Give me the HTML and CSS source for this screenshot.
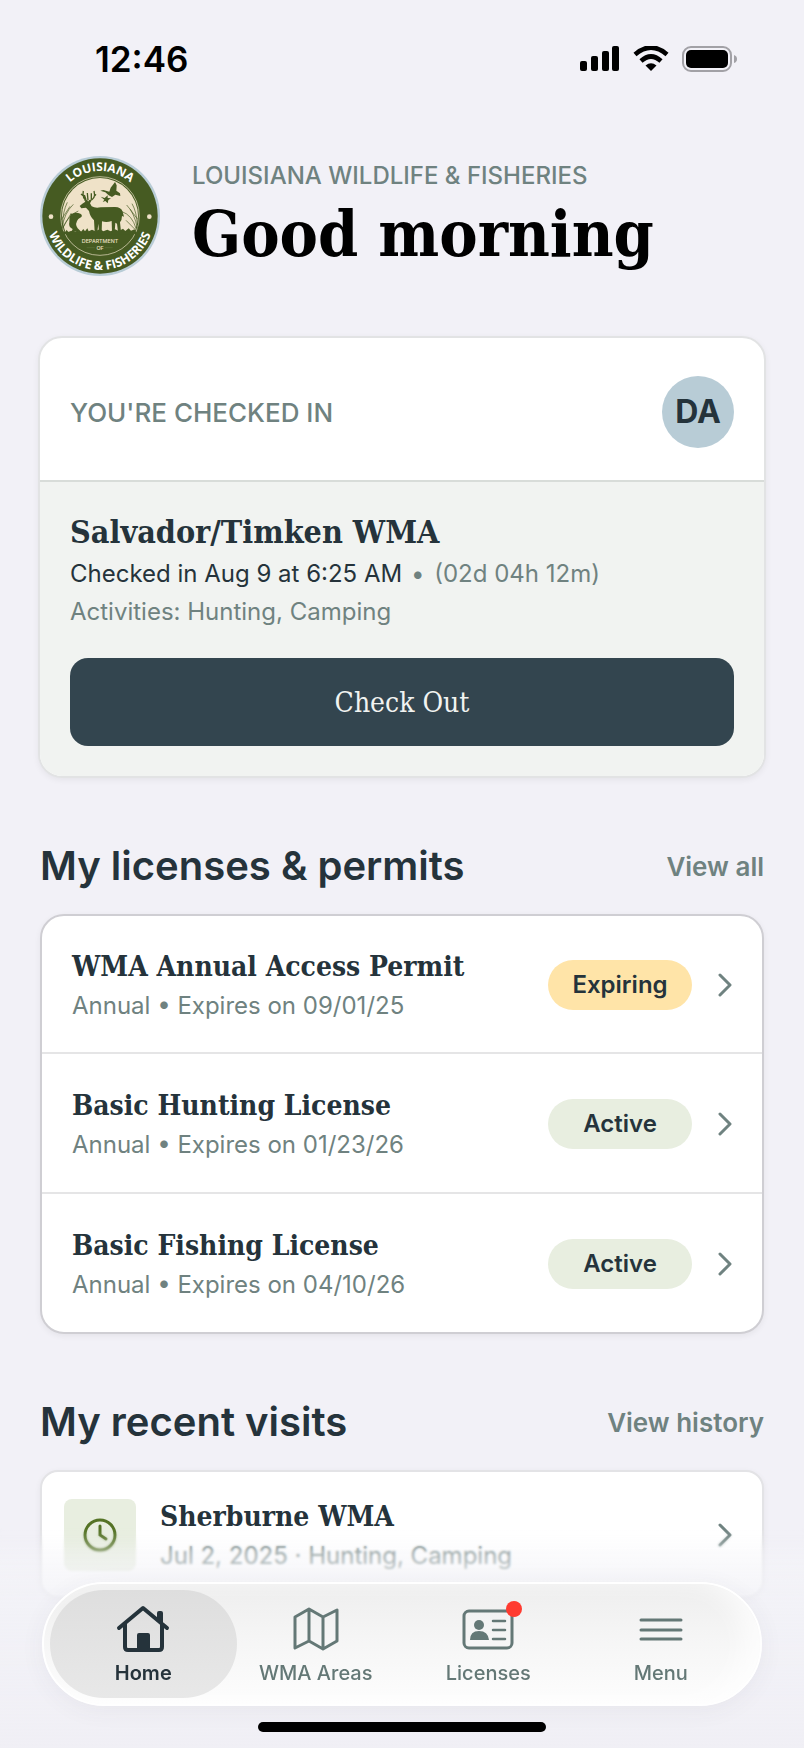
FILE: index.html
```html
<!DOCTYPE html>
<html lang="en">
<head>
    <meta charset="UTF-8">
    <meta name="viewport" content="width=device-width, initial-scale=1.0">
    <title>Louisiana Wildlife &amp; Fisheries</title>
    <link rel="stylesheet" href="styles.css">
</head>
<body>
    <div class="status-bar">
        <span class="time">12:46</span>
        <div class="status-icons">
            <svg width="40" height="26" viewBox="0 0 40 26">
                <rect x="0" y="15" width="7" height="10" rx="2"/>
                <rect x="11" y="10" width="7" height="15" rx="2"/>
                <rect x="22" y="5" width="7" height="20" rx="2"/>
                <rect x="32" y="0" width="7" height="25" rx="2"/>
            </svg>
            <svg width="36" height="26" viewBox="0 0 36 26">
                <path d="M2 8.5 Q18 -5.5 34 8.5" fill="none" stroke="#000" stroke-width="4.6"/>
                <path d="M8 15 Q18 6 28 15" fill="none" stroke="#000" stroke-width="4.6"/>
                <path d="M12.5 19.5 Q18 15 23.5 19.5 L18 25 Z"/>
            </svg>
            <svg width="55" height="26" viewBox="0 0 55 26">
                <rect x="1" y="1" width="48" height="24" rx="8" fill="none" stroke="#a2a1a6" stroke-width="2"/>
                <rect x="4" y="4" width="42" height="18" rx="5"/>
                <path d="M52 9 Q55 10 55 13 Q55 16 52 17 Z" fill="#a2a1a6"/>
            </svg>
        </div>
    </div>

    <header class="header">
        <svg class="logo" viewBox="30 33 360 360">
            <defs>
                <path id="arc-top" d="M75 213 A135 135 0 0 1 345 213"/>
                <path id="arc-bottom" d="M48 213 A162 162 0 0 0 372 213"/>
                <clipPath id="sky"><rect x="80" y="90" width="260" height="170"/></clipPath>
            </defs>
            <circle cx="210" cy="213" r="180" fill="#b8ccd6"/>
            <circle cx="210" cy="213" r="173" fill="#465b22"/>
            <circle cx="210" cy="213" r="118" fill="none" stroke="#efe2c8" stroke-width="2"/>
            <circle cx="210" cy="213" r="114" fill="#efe2c8" clip-path="url(#sky)"/>
            <g fill="#465b22">
                <path d="M149 183 L157 176 L166 170 L162 164 L173 169 L184 167 L180 175 L185 184 Q195 190 212 187 L255 186 Q273 186 278 200 L282 215 L276 213 Q276 225 270 232 L273 260 H264 L261 236 L256 233 L254 260 H246 L245 228 Q230 233 216 229 L215 260 H207 L205 236 L202 260 H194 L192 226 Q180 215 177 198 L168 188 L154 190 Z"/>
                <path d="M211 137 L220 135 L238 140 L242 128 L250 118 L255 111 L260 121 L259 137 L270 145 L271 153 L256 149 L246 156 L236 151 L226 142 Z"/>
                <path d="M212 155 L224 159 L233 151 L233 159 L243 160 L235 165 L233 175 L226 168 L218 171 L223 164 Z"/>
                <path d="M122 208 Q136 200 151 206 Q159 211 153 217 L145 222 Q133 236 143 250 L158 265 L138 258 L122 266 L128 252 Q114 246 118 232 Q117 218 122 208 Z"/>
                <path d="M98 268 L101 258 L106 262 L110 254 L115 262 L124 257 L130 262 L142 257 L152 262 L160 252 L165 259 L172 250 L176 259 L186 254 L196 259 L210 252 L220 259 L232 254 L242 259 L255 253 L266 258 L279 251 L286 258 L296 250 L303 257 L314 253 L321 268 Z"/>
            </g>
            <g fill="none" stroke="#465b22" stroke-width="4">
                <path d="M173 170 Q155 160 160 138 M164 156 L153 147 M168 164 L163 150"/>
                <path d="M177 168 Q199 162 192 138 M190 157 L198 148 M184 163 L184 145 M174 166 L172 144"/>
            </g>
            <g fill="none" stroke="#465b22" stroke-width="2">
                <path d="M96 250 Q102 205 130 178 M98 250 Q114 210 145 198 M98 240 Q98 200 112 172 M94 224 L120 184 M100 246 L124 204"/>
                <path d="M322 250 Q314 205 290 180 M318 250 Q306 210 276 200 M322 240 Q320 200 306 176 M314 252 L288 226 M322 222 L300 192"/>
            </g>
            <g class="logo-text">
                <text font-size="36"><textPath href="#arc-top" startOffset="50%">LOUISIANA</textPath></text>
                <text font-size="37"><textPath href="#arc-bottom" startOffset="50%">WILDLIFE &amp; FISHERIES</textPath></text>
            </g>
            <g class="logo-small">
                <text x="210" y="294">DEPARTMENT</text>
                <text x="210" y="315">OF</text>
            </g>
            <path d="M170 308 H194 M224 308 H248" stroke="#7a8658" stroke-width="1"/>
            <circle cx="63" cy="215" r="7" fill="#efe2c8"/>
            <circle cx="358" cy="215" r="7" fill="#efe2c8"/>
        </svg>
        <div class="greeting">
            <p class="agency">LOUISIANA WILDLIFE &amp; FISHERIES</p>
            <h1>Good morning</h1>
        </div>
    </header>

    <main>
        <section class="card checkin">
            <div class="checkin-head">
                <h2>YOU'RE CHECKED IN</h2>
                <span class="avatar">DA</span>
            </div>
            <div class="checkin-body">
                <h3>Salvador/Timken WMA</h3>
                <p>Checked in Aug 9 at 6:25 AM <span class="muted elapsed">&bull; <span>(02d 04h 12m)</span></span></p>
                <p class="muted">Activities: Hunting, Camping</p>
                <button type="button" class="checkout">Check Out</button>
            </div>
        </section>

        <section>
            <div class="section-head">
                <h2>My licenses &amp; permits</h2>
                <a href="#">View all</a>
            </div>
            <div class="card licenses">
                <a href="#" class="row">
                    <div class="row-text">
                        <h3>WMA Annual Access Permit</h3>
                        <p>Annual &bull; Expires on 09/01/25</p>
                    </div>
                    <span class="badge expiring">Expiring</span>
                    <svg class="chevron" viewBox="0 0 14 24"><path d="M2 2 L12 12 L2 22"/></svg>
                </a>
                <a href="#" class="row">
                    <div class="row-text">
                        <h3>Basic Hunting License</h3>
                        <p>Annual &bull; Expires on 01/23/26</p>
                    </div>
                    <span class="badge">Active</span>
                    <svg class="chevron" viewBox="0 0 14 24"><path d="M2 2 L12 12 L2 22"/></svg>
                </a>
                <a href="#" class="row">
                    <div class="row-text">
                        <h3>Basic Fishing License</h3>
                        <p>Annual &bull; Expires on 04/10/26</p>
                    </div>
                    <span class="badge">Active</span>
                    <svg class="chevron" viewBox="0 0 14 24"><path d="M2 2 L12 12 L2 22"/></svg>
                </a>
            </div>
        </section>

        <section>
            <div class="section-head">
                <h2>My recent visits</h2>
                <a href="#">View history</a>
            </div>
            <div class="card visits">
                <a href="#" class="row">
                    <span class="tile">
                        <svg width="34" height="34" viewBox="0 0 34 34">
                            <circle cx="17" cy="17" r="15"/>
                            <path d="M17 8 V17 L23 21"/>
                        </svg>
                    </span>
                    <div class="row-text">
                        <h3>Sherburne WMA</h3>
                        <p>Jul 2, 2025 &middot; Hunting, Camping</p>
                    </div>
                    <svg class="chevron" viewBox="0 0 14 24"><path d="M2 2 L12 12 L2 22"/></svg>
                </a>
            </div>
        </section>
    </main>

    <footer class="dock">
        <nav class="tabs">
            <a href="#" class="tab active">
                <svg width="54" height="48" viewBox="0 0 54 48">
                    <path d="M3 23 L27 3 L51 23 M9 19 V42 Q9 45 12 45 H43 Q46 45 46 42 V19" fill="none" stroke="currentColor" stroke-width="4" stroke-linecap="round" stroke-linejoin="round"/>
                    <path d="M41 8 Q41 6 43 6 H45 Q47 6 47 8 V20 L41 15 Z M21 45 V30 Q21 28 23 28 H32 Q34 28 34 30 V45 Z"/>
                </svg>
                Home
            </a>
            <a href="#" class="tab">
                <svg width="54" height="48" viewBox="0 0 54 48">
                    <path d="M6 12 L20 4 L34 12 L48 5 V36 L34 44 L20 36 L6 43 Z M20 4 V36 M34 12 V44" fill="none" stroke="currentColor" stroke-width="3" stroke-linejoin="round"/>
                </svg>
                WMA Areas
            </a>
            <a href="#" class="tab">
                <span class="tab-icon">
                    <svg width="54" height="48" viewBox="0 0 54 48">
                        <rect x="3" y="6" width="48" height="37" rx="5" fill="none" stroke="currentColor" stroke-width="3"/>
                        <circle cx="18" cy="20" r="5"/>
                        <path d="M9 35 Q9 26 18 26 Q27 26 28 35 Z"/>
                        <path d="M32 16 H44 M32 25 H44 M32 34 H44" stroke="currentColor" stroke-width="2.5" stroke-linecap="round"/>
                    </svg>
                    <span class="dot"></span>
                </span>
                Licenses
            </a>
            <a href="#" class="tab">
                <svg width="54" height="48" viewBox="0 0 54 48">
                    <path d="M7 15 H47 M7 25 H47 M7 34 H47" stroke="currentColor" stroke-width="3" stroke-linecap="round"/>
                </svg>
                Menu
            </a>
        </nav>
        <div class="home-indicator"></div>
    </footer>
</body>
</html>
```

FILE: styles.css
```css
* {
    box-sizing: border-box;
}
body {
    margin: 0;
    padding: 0 40px;
    background-color: #f2f1f7;
    color: #25333b;
    font-family: Inter, "Liberation Sans", sans-serif;
    font-size: 24px;
}
h1, h2, h3, p {
    margin: 0;
}
a {
    color: inherit;
    text-decoration: none;
}
h1, h3, .checkout {
    font-family: "DejaVu Serif Condensed", "DejaVu Serif", serif;
}
.muted {
    color: #6f8280;
}

/* status bar */
.status-bar {
    display: flex;
    justify-content: space-between;
    align-items: center;
    height: 118px;
    padding: 0 27px 0 55px;
}
.time {
    color: #000;
    font-size: 35px;
    font-weight: 600;
}
.status-icons {
    display: flex;
    gap: 13px;
}

/* header */
.header {
    display: flex;
    align-items: center;
    gap: 32px;
    padding: 38px 0 60px;
}
.logo {
    width: 120px;
    height: 120px;
    flex: none;
}
.logo-text {
    fill: #fff;
    font-family: "Open Sans", sans-serif;
    font-weight: 700;
    text-anchor: middle;
}
.logo-small {
    fill: #efe2c8;
    font-size: 16px;
    font-weight: 500;
    text-anchor: middle;
}
.greeting {
    padding-top: 4px;
}
.agency {
    color: #6f8280;
    font-weight: 500;
    line-height: 32px;
}
h1 {
    color: #000;
    font-size: 64px;
    line-height: 84px;
    white-space: nowrap;
}

/* cards */
.card {
    background-color: #fff;
    border: 2px solid #cfced3;
    border-radius: 24px;
    box-shadow: 0 2px 6px rgba(0, 0, 0, 0.06);
    overflow: hidden;
}
.checkin {
    margin: 0 -2px;
    border-color: #e2e3e4;
}
.checkin-head {
    display: flex;
    justify-content: space-between;
    align-items: center;
    padding: 38px 30px 32px;
}
.checkin-head h2 {
    color: #6f8280;
    font-size: 26px;
    font-weight: 500;
}
.avatar {
    width: 72px;
    height: 72px;
    border-radius: 50%;
    background-color: #b8ccd6;
    font-size: 32px;
    font-weight: 700;
    line-height: 72px;
    text-align: center;
}
.checkin-body {
    padding: 28px 30px 30px;
    border-top: 2px solid #d8dcd9;
    background-color: #f1f3f1;
}
.checkin-body h3 {
    font-size: 32px;
    line-height: 45px;
}
.checkin-body p {
    line-height: 38px;
}
.elapsed {
    padding-left: 2px;
}
.elapsed span {
    padding-left: 3px;
}
.checkout {
    display: block;
    width: 100%;
    height: 88px;
    margin-top: 27px;
    border: none;
    border-radius: 18px;
    background-color: #33454f;
    color: #f1f3f1;
    font-size: 28px;
}

/* sections */
.section-head {
    display: flex;
    justify-content: space-between;
    align-items: center;
    height: 136px;
    padding-top: 40px;
}
.section-head h2 {
    font-size: 40px;
    font-weight: 600;
    line-height: 48px;
}
.section-head a {
    color: #6f8280;
    font-size: 26px;
    font-weight: 600;
}
.row {
    display: flex;
    align-items: center;
    height: 136px;
    padding: 2px 30px 0;
}
.row + .row {
    height: 140px;
    border-top: 2px solid #e5e5e6;
}
.row-text {
    flex: 1;
}
.row h3 {
    font-size: 28px;
    line-height: 42px;
}
.row p {
    color: #6f8280;
    line-height: 36px;
}
.badge {
    width: 144px;
    margin-right: 26px;
    border-radius: 25px;
    background-color: #e8eee0;
    font-weight: 600;
    line-height: 50px;
    text-align: center;
}
.expiring {
    background-color: #ffe4a8;
}
.chevron {
    width: 14px;
    height: 24px;
    fill: none;
    stroke: #6f8280;
    stroke-width: 3;
    stroke-linecap: round;
    stroke-linejoin: round;
}
.visits {
    margin-bottom: 152px;
    border-color: #e3e3e6;
    border-radius: 18px;
}
.visits .row {
    height: 124px;
    padding-left: 22px;
}
.tile {
    display: flex;
    justify-content: center;
    align-items: center;
    width: 72px;
    height: 72px;
    margin-right: 24px;
    border-radius: 8px;
    background-color: #e8eee0;
}
.tile svg {
    fill: none;
    stroke: #557326;
    stroke-width: 3;
    stroke-linecap: round;
}

/* bottom navigation, floats over the page */
.dock {
    position: fixed;
    right: 0;
    bottom: 0;
    left: 0;
    padding: 54px 42px 16px;
}
.dock::before {
    content: "";
    position: absolute;
    inset: 0;
    z-index: -1;
    background: linear-gradient(rgba(244, 244, 248, 0), rgba(244, 244, 248, 0.6) 40px, rgba(242, 242, 247, 0.8) 70px, #f0eff5);
    backdrop-filter: blur(1px);
    -webkit-mask-image: linear-gradient(transparent, #000 24px);
    mask-image: linear-gradient(transparent, #000 24px);
}
.tabs {
    display: flex;
    height: 124px;
    padding: 6px 13px;
    border: 2px solid #fff;
    border-radius: 62px;
    background: linear-gradient(#eee, #f6f6f6 50%, #fdfdfd);
    box-shadow: 0 4px 24px rgba(60, 60, 80, 0.06), inset -16px -4px 24px rgba(255, 255, 255, 0.7);
}
.tab {
    display: flex;
    flex: 1 0 0;
    flex-direction: column;
    align-items: center;
    gap: 6px;
    padding-top: 15px;
    border-radius: 54px;
    color: #647876;
    font-size: 20px;
    font-weight: 500;
    line-height: 28px;
}
.tab svg {
    display: block;
    fill: currentColor;
}
/* the pill is wider than its share of the bar */
.tab.active {
    flex-basis: 14px;
    margin: 0 -7px;
    background: linear-gradient(#dedede, #e8e8e8);
    color: #25333b;
    font-weight: 600;
}
.tab-icon {
    position: relative;
}
.dot {
    position: absolute;
    top: -4px;
    right: -7px;
    width: 16px;
    height: 16px;
    border-radius: 50%;
    background-color: #ff3b30;
}
.home-indicator {
    width: 288px;
    height: 10px;
    margin: 16px auto 0;
    border-radius: 5px;
    background-color: #000;
}
```
